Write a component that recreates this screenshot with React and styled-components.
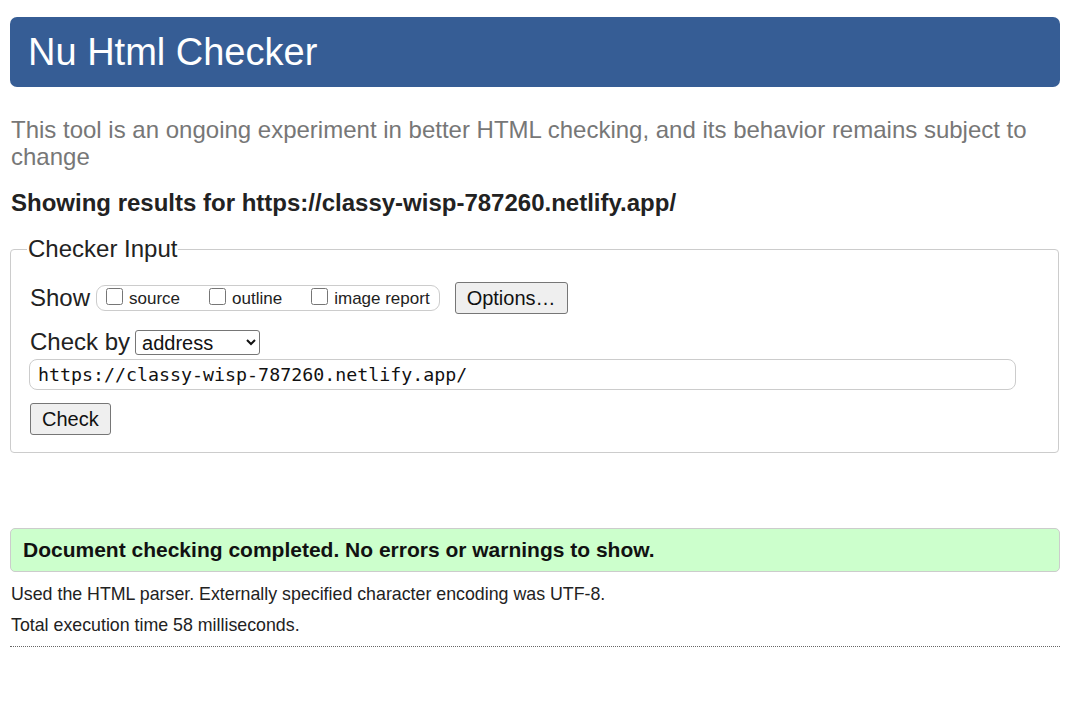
import React from 'react'
import { styled, createGlobalStyle } from 'styled-components'

const GlobalStyle = createGlobalStyle`
    html, body {
        margin: 0;
        padding: 0;
        background: #fff;
    }
    body {
        font-family: 'Liberation Sans', Arial, sans-serif;
        color: #222;
    }
`

const App = () => {
    const url = 'https://classy-wisp-787260.netlify.app/'

    return (
        <Page>
            <GlobalStyle />
            <Header>
                <Title>Nu Html Checker</Title>
            </Header>
            <Intro>
                This tool is an ongoing experiment in better HTML checking, and its behavior remains subject to change
            </Intro>
            <ResultsFor>Showing results for {url}</ResultsFor>

            <InputSet>
                <Legend>Checker Input</Legend>
                <Row>
                    <FieldLabel>Show</FieldLabel>
                    <ShowGroup>
                        <Option><Box type="checkbox" />source</Option>
                        <Option><Box type="checkbox" />outline</Option>
                        <Option><Box type="checkbox" />image report</Option>
                    </ShowGroup>
                    <Button $wide>Options…</Button>
                </Row>
                <Row $top={14}>
                    <FieldLabel>Check by</FieldLabel>
                    <Select defaultValue="address">
                        <option value="address">address</option>
                        <option value="file">file upload</option>
                        <option value="text">text input</option>
                    </Select>
                </Row>
                <UrlInput type="text" defaultValue={url} />
                <Button>Check</Button>
            </InputSet>

            <Success>Document checking completed. No errors or warnings to show.</Success>
            <Note $top={12}>Used the HTML parser. Externally specified character encoding was UTF-8.</Note>
            <Note $top={10}>Total execution time 58 milliseconds.</Note>
            <Rule />
        </Page>
    )
}

const Page = styled.div`
    width: 1050px;
    padding: 17px 0 40px 10px;
`

const Header = styled.header`
    height: 70px;
    background-color: #365d95;
    border-radius: 7px;
    display: flex;
    align-items: center;
    padding-left: 18px;
`

const Title = styled.h1`
    margin: 0;
    font-size: 38px;
    font-weight: normal;
    color: #fff;
    line-height: 1;
`

const Intro = styled.p`
    margin: 29px 30px 0 1px;
    font-size: 24px;
    line-height: 27px;
    color: #777;
`

const ResultsFor = styled.h2`
    margin: 19px 0 0 1px;
    font-size: 24px;
    line-height: 28px;
    font-weight: bold;
    color: #222;
`

const InputSet = styled.fieldset`
    margin: 18px 0 0 0;
    padding: 18px 20px 17px 19px;
    border: 1px solid #ccc;
    border-radius: 4px;
    min-width: 0;
    width: 1049px;
    box-sizing: border-box;
`

const Legend = styled.legend`
    padding: 0 1px;
    margin-left: -3px;
    font-size: 24px;
    line-height: 28px;
    color: #222;
`

const Row = styled.div`
    display: flex;
    align-items: center;
    margin-top: ${(p) => (p.$top ? p.$top + 'px' : '0')};
`

const FieldLabel = styled.span`
    font-size: 24px;
    color: #222;
    margin-right: 6px;
`

const ShowGroup = styled.span`
    display: inline-flex;
    align-items: center;
    height: 24px;
    padding: 0 9px 0 9px;
    border: 1px solid #ccc;
    border-radius: 9px;
    gap: 29px;
`

const Option = styled.label`
    display: inline-flex;
    align-items: center;
    font-size: 17px;
    color: #222;
    padding-top: 2px;
`

const Box = styled.input`
    width: 17px;
    height: 17px;
    margin: -4px 6px 0 0;
`

const Button = styled.button`
    font-family: 'Liberation Sans', Arial, sans-serif;
    font-size: 20px;
    color: #111;
    background: #efefef;
    border: 1px solid #767676;
    border-radius: 3px;
    height: 32px;
    padding: 0 11px;
    margin-left: ${(p) => (p.$wide ? '15px' : '0')};
    margin-top: ${(p) => (p.$wide ? '1px' : '0')};
    align-self: flex-start;
`

const Select = styled.select`
    font-family: 'Liberation Sans', Arial, sans-serif;
    font-size: 20px;
    height: 25px;
    width: 125px;
    color: #111;
    border: 1px solid #767676;
    border-radius: 3px;
    background: #fff;
    padding: 0 2px;
    margin-left: -1px;
`

const UrlInput = styled.input`
    display: block;
    box-sizing: border-box;
    width: 987px;
    height: 31px;
    margin: 3px 0 13px -1px;
    padding: 0 8px;
    font-family: 'DejaVu Sans Mono', 'Liberation Mono', monospace;
    font-size: 18.3px;
    color: #111;
    border: 1px solid #ccc;
    border-radius: 8px;
    outline: none;
`

const Success = styled.p`
    margin: 75px 0 0 0;
    width: 1050px;
    box-sizing: border-box;
    height: 44px;
    display: flex;
    align-items: center;
    padding-left: 12px;
    background-color: #ccffcc;
    border: 1px solid #ccc;
    border-radius: 5px;
    font-size: 21px;
    font-weight: bold;
    color: #111;
`

const Note = styled.p`
    margin: ${(p) => p.$top}px 0 0 1px;
    font-size: 17.8px;
    line-height: 21px;
    color: #222;
`

const Rule = styled.hr`
    margin: 10px 0 0 0;
    width: 1050px;
    border: 0;
    border-top: 1px dotted #666;
`

export default App
